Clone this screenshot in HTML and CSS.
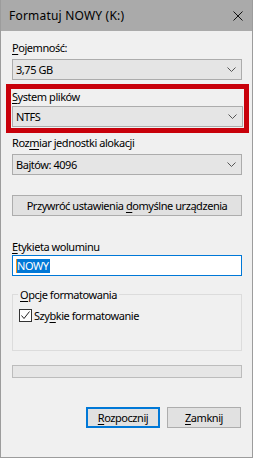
FILE: index.html
```html
<!DOCTYPE html>
<html lang="pl">
<head>
    <meta charset="UTF-8">
    <title>Formatuj NOWY (K:)</title>
    <link rel="stylesheet" href="styles.css">
</head>
<body>
    <div class="window">
        <div class="titlebar">
            <span class="title">Formatuj NOWY (K:)</span>
            <svg class="close" width="10" height="10" viewBox="0 0 10 10">
                <path d="M0.5 0.5 L9.5 9.5 M9.5 0.5 L0.5 9.5" stroke="#111" stroke-width="1" fill="none"/>
            </svg>
        </div>

        <div class="content">
            <div class="label first"><u>P</u>ojemność:</div>
            <div class="combo">
                <span>3,75 GB</span>
                <svg class="chev" width="9" height="5" viewBox="0 0 9 5"><path d="M0.5 0.5 L4.5 4.5 L8.5 0.5" stroke="#555" fill="none"/></svg>
            </div>

            <!-- marked field -->
            <div class="highlight">
                <div class="label tight"><u>S</u>ystem plików</div>
                <div class="combo near">
                    <span>NTFS</span>
                    <svg class="chev" width="9" height="5" viewBox="0 0 9 5"><path d="M0.5 0.5 L4.5 4.5 L8.5 0.5" stroke="#555" fill="none"/></svg>
                </div>
            </div>

            <div class="label after-box">Roz<u>m</u>iar jednostki alokacji</div>
            <div class="combo">
                <span>Bajtów: 4096</span>
                <svg class="chev" width="9" height="5" viewBox="0 0 9 5"><path d="M0.5 0.5 L4.5 4.5 L8.5 0.5" stroke="#555" fill="none"/></svg>
            </div>

            <div class="button wide"><span>Przywróć ustawienia <u>d</u>omyślne urządzenia</span></div>

            <div class="label volume"><u>E</u>tykieta woluminu</div>
            <div class="textbox"><span class="caret"></span><span class="sel">NOWY</span></div>

            <fieldset class="group">
                <legend><u>O</u>pcje formatowania</legend>
                <div class="check-row">
                    <span class="checkbox">
                        <svg width="11" height="11" viewBox="0 0 11 11"><path d="M1.5 5.5 L4 8.5 L9.5 1.5" stroke="#222" stroke-width="1" fill="none"/></svg>
                    </span>
                    <span>Szy<u>b</u>kie formatowanie</span>
                </div>
            </fieldset>

            <div class="progress"></div>

            <div class="actions">
                <div class="button default"><span><u>R</u>ozpocznij</span></div>
                <div class="button"><span><u>Z</u>amknij</span></div>
            </div>
        </div>
    </div>
</body>
</html>
```

FILE: styles.css
```css
html, body {
    margin: 0;
    padding: 0;
    background-color: #f0f0f0;
}
body {
    font-family: "Noto Sans", "Open Sans", sans-serif;
    font-size: 11px;
    letter-spacing: -0.45px;
    color: #000;
}
.window {
    width: 253px;
    height: 458px;
    box-sizing: border-box;
    background-color: #f0f0f0;
    border: 1px solid #9c9c9c;
    border-top: none;
    overflow: hidden;
}
.titlebar {
    height: 31px;
    margin: 0 -1px;
    background-color: #aaaaaa;
    display: flex;
    align-items: center;
    justify-content: space-between;
    padding: 0 10px 0 9px;
}
.title {
    font-size: 12px;
    letter-spacing: 0.2px;
    color: #000;
}
.close {
    display: block;
}
.content {
    padding: 0 10px 0 11px;
}
u {
    text-decoration: underline;
    text-underline-offset: 2px;
}
.label {
    height: 15px;
    line-height: 15px;
    white-space: nowrap;
}
.label.first {
    margin-top: 9px;
}
.label.after-box {
    margin-top: 2px;
}
.label.volume {
    margin-top: 23px;
}
.combo {
    margin-top: 4px;
    height: 21px;
    box-sizing: border-box;
    background-color: #e5e5e5;
    border: 1px solid #acacac;
    display: flex;
    align-items: center;
    justify-content: space-between;
    padding: 0 5px 0 3px;
}
.combo.near {
    margin-top: 2px;
}
.chev {
    display: block;
}
.highlight {
    margin: 4px -7px 0 -6px;
    border: 5px solid #c8000a;
    padding: 0 1px 1px 1px;
}
.button {
    height: 21px;
    box-sizing: border-box;
    background-color: #e1e1e1;
    border: 1px solid #adadad;
    display: flex;
    align-items: center;
    justify-content: center;
    white-space: nowrap;
}
.button.wide {
    margin-top: 20px;
}
.textbox {
    margin-top: 1px;
    height: 21px;
    box-sizing: border-box;
    background-color: #fff;
    border: 1px solid #0078d7;
    display: flex;
    align-items: center;
    padding-left: 3px;
}
.caret {
    width: 1px;
    height: 14px;
    background-color: #f7941d;
}
.sel {
    background-color: #0078d7;
    color: #fff;
    line-height: 14px;
    height: 14px;
    padding-right: 1px;
}
.group {
    margin: 11px 0 0 0;
    padding: 6px 5px 0 5px;
    height: 64px;
    box-sizing: border-box;
    border: 1px solid #dcdcdc;
    min-width: 0;
}
.group legend {
    padding: 0 2px;
    line-height: 15px;
}
.check-row {
    display: flex;
    align-items: center;
    gap: 2px;
    margin-left: 1px;
}
.checkbox {
    width: 13px;
    height: 13px;
    box-sizing: border-box;
    border: 1px solid #333;
    background-color: #fff;
    display: flex;
    align-items: center;
    justify-content: center;
}
.checkbox svg {
    display: block;
}
.progress {
    margin-top: 14px;
    height: 13px;
    box-sizing: border-box;
    background-color: #e6e6e6;
    border: 1px solid #bcbcbc;
}
.actions {
    margin-top: 29px;
    display: flex;
    justify-content: flex-end;
    gap: 7px;
    padding-right: 1px;
}
.actions .button {
    width: 74px;
}
.button.default {
    border: 2px solid #0078d7;
}
```
